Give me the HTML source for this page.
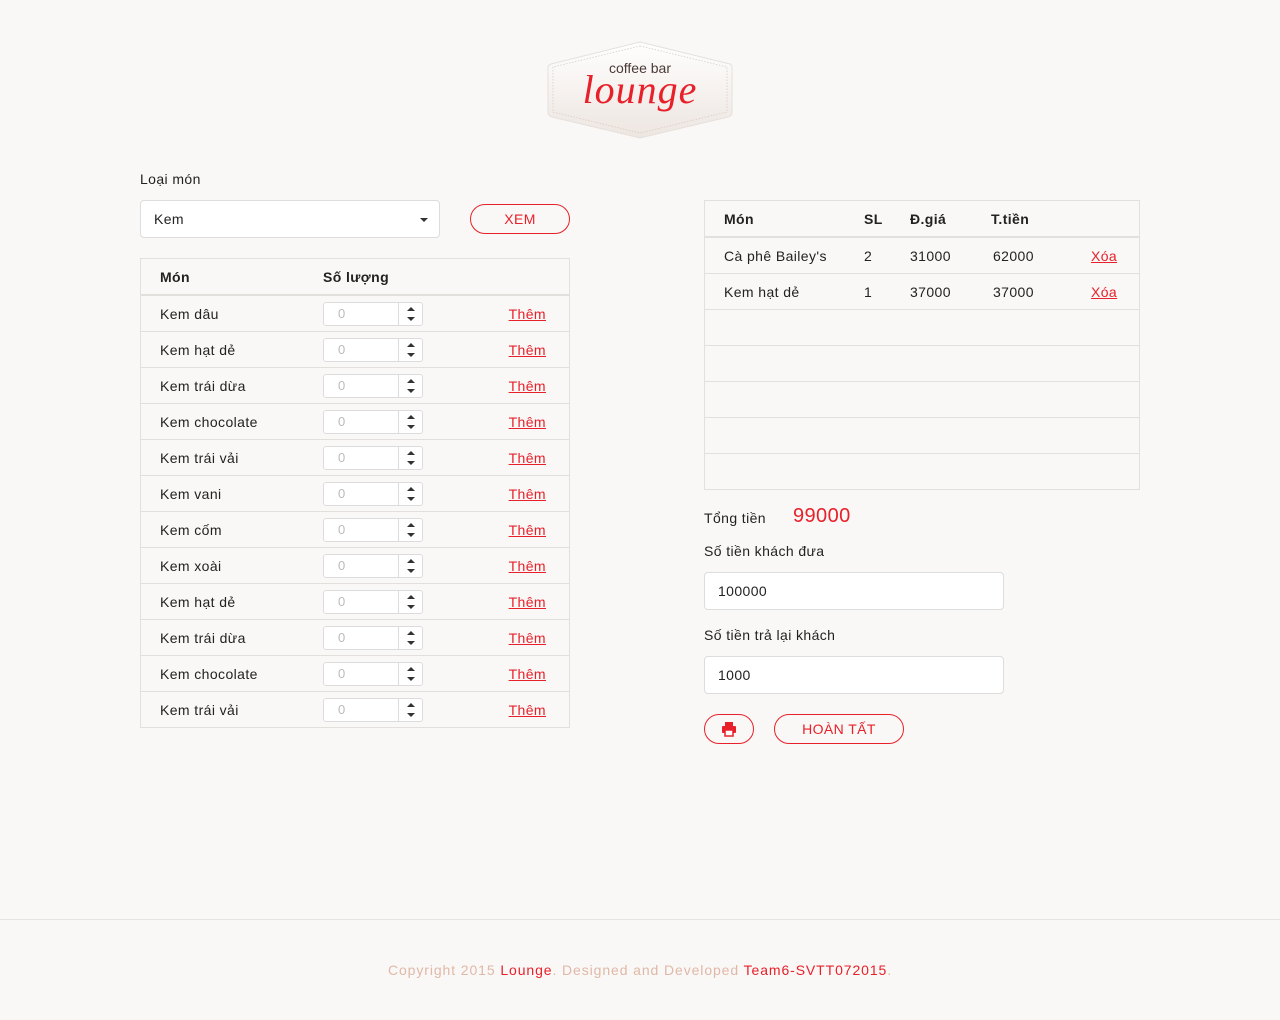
<!DOCTYPE html>
<html><head><meta charset="utf-8"><style>
body{margin:0;background:#f9f8f6;font-family:"Liberation Sans",sans-serif;font-size:14px;color:#222;width:1280px;height:1020px;position:relative;overflow:hidden;letter-spacing:0.4px}
.a{position:absolute}
table{border-collapse:collapse;position:absolute}
td,th{height:35px;border-bottom:1px solid #e2e0dd;padding:0;text-align:left}
th{font-weight:bold;border-bottom:2px solid #e2e0dd;height:35px}
.tbl{border:1px solid #e2e0dd}
.red{color:#e8202a}
a{color:#e8202a;text-decoration:underline}
.spin{display:inline-block;width:98px;height:22px;border:1px solid #dcdcdc;border-radius:3px;background:#fff;position:relative;vertical-align:middle;color:#bbb;font-size:13px;line-height:22px;text-indent:14px}
.spin:after{content:"";position:absolute;left:74px;top:0;bottom:0;border-left:1px solid #dcdcdc}
.spin i{position:absolute;left:83px;width:0;height:0;border-left:4px solid transparent;border-right:4px solid transparent}
.up{top:4px;border-bottom:4px solid #333}.dn{bottom:4px;border-top:4px solid #333}
.inp{position:absolute;background:#fff;border:1px solid #ddd;border-radius:4px;box-sizing:border-box;line-height:36px;padding-left:13px}
.btn{position:absolute;border:1px solid #e8202a;border-radius:16px;color:#e8202a;text-align:center;box-sizing:border-box}
</style></head><body>
<svg class="a" style="left:546px;top:40px" width="188" height="100" viewBox="0 0 188 100">
<defs><linearGradient id="g" x1="0" y1="0" x2="0" y2="1"><stop offset="0" stop-color="#fff"/><stop offset="1" stop-color="#ede5e0"/></linearGradient></defs>
<path d="M94 2 L184 24 Q186 25 186 28 L186 72 Q186 76 182 77 L94 98 L6 77 Q2 76 2 72 L2 28 Q2 25 5 24 Z" fill="url(#g)" stroke="#e6e0dc"/>
<path d="M94 6 L181 27 L181 72 L94 93 L7 72 L7 27 Z" fill="none" stroke="#d8ccc6" stroke-dasharray="1.5 1.5" stroke-width="0.8"/>
</svg>
<div class="a" style="left:540px;top:60px;width:200px;text-align:center;font-size:14px;color:#4a3a35;letter-spacing:0">coffee bar</div>
<div class="a red" style="left:540px;top:66px;width:200px;text-align:center;font-family:'Liberation Serif',serif;font-style:italic;font-size:40px;letter-spacing:1px">lounge</div>

<div class="a" style="left:140px;top:171px">Loại món</div>
<div class="inp" style="left:140px;top:200px;width:300px;height:38px">Kem<span class="a" style="right:11px;top:17px;border-left:4px solid transparent;border-right:4px solid transparent;border-top:4px solid #333"></span></div>
<div class="btn" style="left:470px;top:204px;width:100px;height:30px;line-height:28px">XEM</div>

<table class="tbl" style="left:140px;top:258px;width:430px">
<tr><th style="padding-left:19px;width:163px">Món</th><th>Số lượng</th><th></th></tr>
<tbody id="lt"></tbody></table>

<table class="tbl" style="left:704px;top:200px;width:436px">
<tr><th style="padding-left:19px;width:140px">Món</th><th style="width:46px">SL</th><th style="width:81px">Đ.giá</th><th style="width:100px">T.tiền</th><th></th></tr>
<tr><td style="padding-left:19px">Cà phê Bailey's</td><td>2</td><td>31000</td><td style="padding-left:2px">62000</td><td><a>Xóa</a></td></tr>
<tr><td style="padding-left:19px">Kem hạt dẻ</td><td>1</td><td>37000</td><td style="padding-left:2px">37000</td><td><a>Xóa</a></td></tr>
<tr><td colspan="5"></td></tr><tr><td colspan="5"></td></tr><tr><td colspan="5"></td></tr><tr><td colspan="5"></td></tr><tr><td colspan="5" style="border:0"></td></tr>
</table>

<div class="a" style="left:704px;top:510px">Tổng tiền</div>
<div class="a red" style="left:793px;top:505px;font-size:20px">99000</div>
<div class="a" style="left:704px;top:543px">Số tiền khách đưa</div>
<div class="inp" style="left:704px;top:572px;width:300px;height:38px">100000</div>
<div class="a" style="left:704px;top:627px">Số tiền trả lại khách</div>
<div class="inp" style="left:704px;top:656px;width:300px;height:38px">1000</div>
<div class="btn" style="left:704px;top:714px;width:50px;height:30px"><svg style="margin-top:6px" width="16" height="16" viewBox="0 0 16 16"><rect x="4" y="1" width="8" height="4" fill="#e8202a"/><rect x="1" y="5" width="14" height="7" rx="1" fill="#e8202a"/><rect x="4" y="9" width="8" height="6" fill="#fff" stroke="#e8202a" stroke-width="1.5"/></svg></div>
<div class="btn" style="left:774px;top:714px;width:130px;height:30px;line-height:28px">HOÀN TẤT</div>

<div class="a" style="left:0;top:919px;width:1280px;border-top:1px solid #e6e3e0"></div>
<div class="a" style="left:0;top:962px;width:1280px;text-align:center;color:#e0b8a8;letter-spacing:0.9px">Copyright 2015 <span class="red">Lounge</span>. Designed and Developed <span class="red">Team6-SVTT072015</span>.</div>
<script>
var n=["Kem dâu","Kem hạt dẻ","Kem trái dừa","Kem chocolate","Kem trái vải","Kem vani","Kem cốm","Kem xoài","Kem hạt dẻ","Kem trái dừa","Kem chocolate","Kem trái vải"],h="";
n.forEach(function(x,i){h+='<tr><td style="padding-left:19px'+(i==11?';border:0':'')+'">'+x+'</td><td style="'+(i==11?'border:0':'')+'"><span class="spin">0<i class="up"></i><i class="dn"></i></span></td><td style="text-align:right;padding-right:23px'+(i==11?';border:0':'')+'"><a>Thêm</a></td></tr>'});
document.getElementById("lt").innerHTML=h;
</script>
</body></html>
